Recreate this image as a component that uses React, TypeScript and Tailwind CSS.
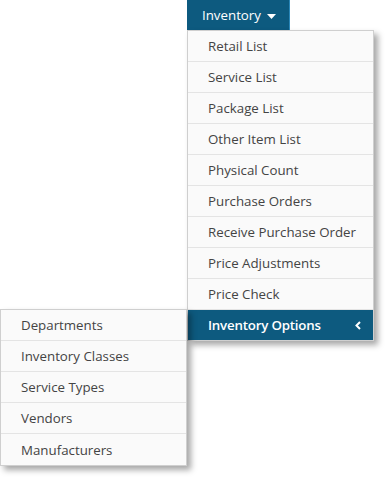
import React from "react";

const items = [
  "Retail List",
  "Service List",
  "Package List",
  "Other Item List",
  "Physical Count",
  "Purchase Orders",
  "Receive Purchase Order",
  "Price Adjustments",
  "Price Check",
];

const subItems = ["Departments", "Inventory Classes", "Service Types", "Vendors", "Manufacturers"];

export default function App() {
  return (
    <div
      className="w-[390px] h-[481px] bg-white relative overflow-hidden text-[13.3px] text-[#444]"
      style={{ fontFamily: '"Open Sans", "Noto Sans", sans-serif' }}
    >
      <div className="ml-[187px] w-[103px] h-[30px] bg-[#0d5a7f] border-r border-[#2a86b8] text-white flex items-center pl-[15px] gap-[6px] pt-[1px]">
        <span>Inventory</span>
        <svg width="9" height="5" viewBox="0 0 9 5" className="mt-[1px]">
          <path d="M0 0 H9 L4.5 5 Z" fill="white" />
        </svg>
      </div>
      <div className="ml-[187px] w-[187px] bg-[#fafafa] border border-[#cfcfcf] shadow-[4px_4px_6px_rgba(0,0,0,0.35)]">
        {items.map((t) => (
          <div key={t} className="h-[31px] border-b border-[#e4e4e4] flex items-center pl-[20px] pt-[2px] whitespace-nowrap">
            {t}
          </div>
        ))}
        <div className="relative h-[30px] bg-[#0d5a7f] text-white font-semibold flex items-center pl-[20px] pr-[12px] pt-[1px] justify-between">
          <span className="tracking-[-0.2px]">Inventory Options</span>
          <svg width="6" height="9" viewBox="0 0 6 9">
            <path d="M5 1 L1.5 4.5 L5 8" stroke="white" strokeWidth="2" fill="none" />
          </svg>
          <div className="absolute right-full top-[-1px] mr-[1px] w-[187px] bg-[#fafafa] border border-[#cfcfcf] shadow-[4px_4px_6px_rgba(0,0,0,0.35)] text-[#444] font-normal">
            {subItems.map((t, i) => (
              <div
                key={t}
                className={
                  "h-[31px] flex items-center pl-[20px] pt-[2px] whitespace-nowrap " +
                  (i < subItems.length - 1 ? "border-b border-[#e4e4e4]" : "")
                }
              >
                {t}
              </div>
            ))}
          </div>
        </div>
      </div>
    </div>
  );
}
